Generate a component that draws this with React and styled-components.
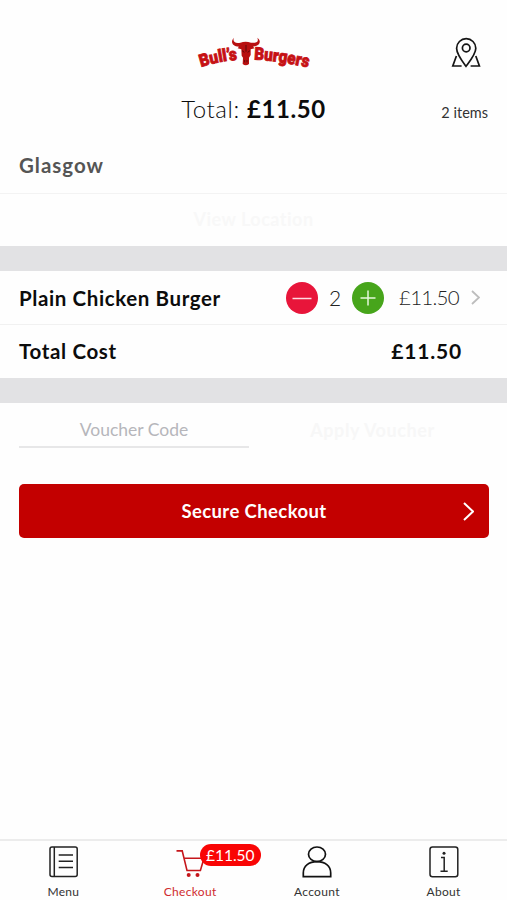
// =============================================
// EXTERNAL IMPORTS
// =============================================

import React, { useState } from 'react';
import styled, { createGlobalStyle } from 'styled-components';

// =============================================
// DATA
// =============================================
const PRICE = 5.75;

const TABS = [
  { name: 'Menu', icon: MenuIcon },
  { name: 'Checkout', icon: CartIcon },
  { name: 'Account', icon: AccountIcon },
  { name: 'About', icon: AboutIcon },
];

// =============================================
// ICONS
// =============================================
function Logo() {
  return (
    <LogoSvg viewBox="0 0 450 165" role="img" aria-label="Bull's Burgers">
      <defs>
        <path id="arc-left" d="M66 126 Q118 109 188 103" />
        <path id="arc-right" d="M225 104 Q310 108 396 130" />
      </defs>
      <LogoText textLength="112" lengthAdjust="spacingAndGlyphs">
        <textPath href="#arc-left">Bull’s</textPath>
      </LogoText>
      <LogoText textLength="164" lengthAdjust="spacingAndGlyphs">
        <textPath href="#arc-right">Burgers</textPath>
      </LogoText>
      <path
        fill="#b80f10"
        d="M165 38 C154 48 158 64 180 65 L176 70 L187 73 L188 92 L192 98 L191 117 Q200 125 210 117 L210 98 L215 90 L215 73 L227 70 L222 65 C244 63 248 48 235 38 C240 50 233 55 216 53 Q200 47 184 53 C167 56 160 49 165 38 Z"
      />
      <path
        d="M189 77 l7 5 M213 77 l-7 5 M197 105 v7 M204 105 v7 M201 60 v20"
        stroke="#5d080b"
        strokeWidth="3"
        fill="none"
      />
    </LogoSvg>
  );
}

function PinIcon() {
  return (
    <svg width="30" height="32" viewBox="0 0 30 32" fill="none" stroke="#151515" strokeWidth="1.7">
      <path d="M15 29.3 C11 24 5.6 17.2 5.6 11.3 A9.6 9.6 0 0 1 24.8 11.3 C24.8 17.2 19 24 15 29.3 Z" />
      <circle cx="15.2" cy="11" r="3.8" />
      <path d="M5.4 19 L1.8 29 H10.6 M24.8 19 L28.4 29 H19.6" />
    </svg>
  );
}

function Chevron({ width, height, color, stroke }) {
  return (
    <svg width={width} height={height} viewBox={`0 0 ${width} ${height}`} fill="none">
      <path
        d={`M1 1 L${width - 1} ${height / 2} L1 ${height - 1}`}
        stroke={color}
        strokeWidth={stroke}
      />
    </svg>
  );
}

function MenuIcon() {
  return (
    <svg width="30" height="32" viewBox="-1 0 30 32" fill="none" stroke="#222" strokeWidth="1.5">
      <rect x="1" y="1" width="27.2" height="29.6" rx="2" />
      <path d="M5.3 1 V30.6" />
      <path d="M9.7 9 H24 M9.7 15.3 H24 M9.7 21.5 H24" />
    </svg>
  );
}

function CartIcon() {
  return (
    <svg width="30" height="32" viewBox="0 0 30 32" fill="none" stroke="#c5161b" strokeWidth="1.6">
      <path d="M1.5 4.9 H7.2 L12 24.5 H25.4 L29 12.3 H9.2" />
      <circle cx="13.7" cy="29" r="2" fill="#c5161b" stroke="none" />
      <circle cx="22.5" cy="29" r="2" fill="#c5161b" stroke="none" />
    </svg>
  );
}

function AccountIcon() {
  return (
    <svg width="30" height="32" viewBox="0 0 30 32" fill="none" stroke="#111" strokeWidth="1.7">
      <ellipse cx="15" cy="8.3" rx="8.5" ry="7.3" />
      <path d="M1.3 30.7 V27 C1.3 20 7 15.6 15 15.6 S28.7 20 28.7 27 V30.7 Z" />
    </svg>
  );
}

function AboutIcon() {
  return (
    <svg width="30" height="32" viewBox="0 0 30 32" fill="none" stroke="#222" strokeWidth="1.5">
      <rect x="1" y="1" width="27.8" height="29.8" rx="2.5" />
      <path d="M12 11.5 H15.2 V25 M11.5 25.2 H18.7" />
      <circle cx="15" cy="7.2" r="1.5" fill="#222" stroke="none" />
    </svg>
  );
}

// =============================================
// APP
// =============================================
const App = () => {
  const [count, setCount] = useState(2);
  const [active, setActive] = useState('Checkout');

  const total = `£${(count * PRICE).toFixed(2)}`;

  return (
    <>
      <GlobalStyle />
      <Screen>
        <Header>
          <Logo />
          <PinButton aria-label="Find a store">
            <PinIcon />
          </PinButton>
        </Header>

        <Summary>
          <Total>
            Total: <b>{total}</b>
          </Total>
          <ItemCount>{count} items</ItemCount>
        </Summary>

        <Store>Glasgow</Store>
        <LocationButton>View Location</LocationButton>

        <Band />
        <Row $divider>
          <RowTitle $spacing="0.61px">Plain Chicken Burger</RowTitle>
          <Round $color="#e8153a" aria-label="Remove" onClick={() => setCount(Math.max(0, count - 1))}>
            <svg width="20" height="20" viewBox="0 0 20 20" stroke="#ffdbe2" strokeWidth="1.5">
              <path d="M.5 10.5 H19.5" />
            </svg>
          </Round>
          <Quantity>{count}</Quantity>
          <Round $color="#47a51b" aria-label="Add" onClick={() => setCount(count + 1)}>
            <svg width="16" height="16" viewBox="0 0 16 16" stroke="#e5f7dc" strokeWidth="1.5">
              <path d="M.5 8 H15.5 M8 .5 V15.5" />
            </svg>
          </Round>
          <Price>{total}</Price>
          <Chevron width={9} height={15} color="#bdbdbd" stroke={1.8} />
        </Row>
        <Row>
          <RowTitle $spacing="0.65px">Total Cost</RowTitle>
          <TotalPrice>{total}</TotalPrice>
        </Row>
        <Band />

        <Voucher>
          <VoucherInput placeholder="Voucher Code" />
          <ApplyButton>Apply Voucher</ApplyButton>
        </Voucher>

        <CheckoutButton>
          <span>Secure Checkout</span>
          <Chevron width={11} height={19} color="#fff" stroke={2} />
        </CheckoutButton>

        <TabBar>
          {TABS.map(({ name, icon: Icon }) => (
            <Tab key={name} $active={name === active} onClick={() => setActive(name)}>
              <Icon />
              {name === 'Checkout' && <Badge>{total}</Badge>}
              <span>{name}</span>
            </Tab>
          ))}
        </TabBar>
      </Screen>
    </>
  );
};

export default App;

// =============================================
// STYLES
// =============================================
const GlobalStyle = createGlobalStyle`
  * {
    box-sizing: border-box;
  }

  body {
    margin: 0;
    background: #fefefe;
    font-family: Lato, 'Liberation Sans', sans-serif;
  }

  button,
  input {
    margin: 0;
    padding: 0;
    border: 0;
    background: none;
    color: inherit;
    font: inherit;
  }

  svg {
    display: block;
    flex: none;
  }
`;

const Screen = styled.main`
  display: flex;
  flex-direction: column;
  width: 507px;
  height: 900px;
  overflow: hidden;
  background: #fefefe;
  color: #0c0c0c;
`;

const Header = styled.header`
  display: grid;
  grid-template-columns: 1fr 150px 1fr;
  align-items: center;
  height: 55px;
  margin-top: 25px;
  padding: 0 26px 0 27px;
`;

const LogoSvg = styled.svg`
  grid-column: 2;
  width: 150px;
  height: 55px;
`;

const LogoText = styled.text`
  fill: #c61114;
  stroke: #c61114;
  stroke-width: 2.5px;
  font: 900 52px Roboto, 'Liberation Sans', sans-serif;
`;

const PinButton = styled.button`
  justify-self: end;
`;

const Summary = styled.section`
  display: grid;
  grid-template-columns: 1fr auto 1fr;
  align-items: center;
  height: 57px;
  padding: 0 19px;
`;

const Total = styled.h1`
  grid-column: 2;
  margin: 0;
  font-size: 24px;
  font-weight: 300;
  letter-spacing: 0.6px;
  white-space: nowrap;

  b {
    font-weight: 700;
  }
`;

const ItemCount = styled.span`
  justify-self: end;
  padding-top: 8px;
  color: #333;
  font-size: 14.5px;
`;

const Store = styled.h2`
  display: flex;
  align-items: center;
  height: 57px;
  margin: 0;
  padding: 0 19px;
  border-bottom: 1px solid #f3f3f3;
  color: #555;
  font-size: 20.5px;
  font-weight: 700;
  letter-spacing: 1px;
`;

const LocationButton = styled.button`
  height: 52px;
  padding-bottom: 2px;
  color: #f8f8f8;
  font-size: 18px;
  font-weight: 700;
  letter-spacing: 0.5px;
`;

const Band = styled.div`
  height: 25px;
  background: #e2e2e4;
`;

const Row = styled.div`
  display: flex;
  align-items: center;
  height: ${({ $divider }) => ($divider ? '54px' : '53px')};
  padding: ${({ $divider }) => ($divider ? '0 27px 0 19px' : '0 27px 2px 19px')};
  border-bottom: ${({ $divider }) => ($divider ? '1px solid #f1f1f1' : '0')};
`;

const RowTitle = styled.span`
  flex: 1;
  font-size: 20.5px;
  font-weight: 700;
  letter-spacing: ${({ $spacing }) => $spacing};
`;

const Round = styled.button`
  display: flex;
  align-items: center;
  justify-content: center;
  width: 32px;
  height: 32px;
  border-radius: 50%;
  background: ${({ $color }) => $color};
`;

const Quantity = styled.span`
  width: 34px;
  color: #222;
  font-size: 21px;
  font-weight: 300;
  text-align: center;
`;

const Price = styled.span`
  width: 75px;
  margin-right: 12px;
  padding-bottom: 1px;
  color: #222;
  font-size: 20.5px;
  font-weight: 300;
  letter-spacing: -0.7px;
  text-align: right;
`;

const TotalPrice = styled.strong`
  margin-right: 18px;
  font-size: 21px;
  letter-spacing: 0.8px;
`;

const Voucher = styled.section`
  display: grid;
  grid-template-columns: 230px 1fr;
  gap: 10px;
  height: 45px;
  padding: 0 19px;
`;

const VoucherInput = styled.input`
  height: 45px;
  padding-top: 9px;
  border-bottom: 2px solid #e7e7e8;
  font-size: 17.5px;
  text-align: center;
  outline: none;

  &::placeholder {
    color: #b6b6bb;
    opacity: 1;
  }
`;

const ApplyButton = styled.button`
  padding-top: 8px;
  padding-right: 2px;
  color: #f7f7f7;
  font-size: 18px;
  font-weight: 700;
  letter-spacing: 0.6px;
`;

const CheckoutButton = styled.button`
  display: flex;
  align-items: center;
  height: 54px;
  margin: 36px 18px 0 19px;
  padding: 0 15px 0 26px;
  border-radius: 5px;
  background: #c30000;
  color: #fff;
  font-size: 18.5px;
  font-weight: 700;
  letter-spacing: 0.4px;

  span {
    flex: 1;
  }
`;

const TabBar = styled.nav`
  display: grid;
  grid-template-columns: repeat(4, 1fr);
  height: 61px;
  margin-top: auto;
  border-top: 2px solid #ececec;
`;

const Tab = styled.button`
  position: relative;
  display: flex;
  flex-direction: column;
  align-items: center;
  gap: 5px;
  padding-top: 5px;
  color: ${({ $active }) => ($active ? '#cf2b2f' : '#333')};
  font-size: 12px;
  line-height: 17px;
  letter-spacing: 0.3px;
`;

const Badge = styled.em`
  position: absolute;
  top: 3px;
  left: 73px;
  width: 61px;
  height: 22px;
  border-radius: 11px;
  background: #f90505;
  color: #fff;
  font-size: 15.5px;
  font-style: normal;
  line-height: 22px;
  text-align: center;
  letter-spacing: 0;
`;
